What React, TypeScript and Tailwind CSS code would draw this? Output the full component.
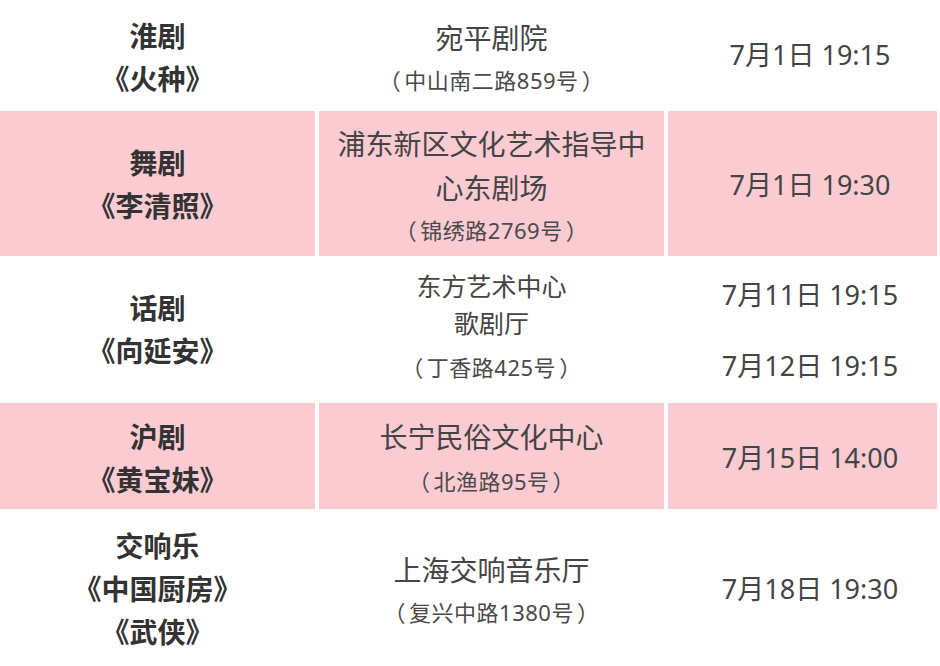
import React from "react";

const font = { fontFamily: '"Noto Sans", "Noto Sans CJK SC", sans-serif' };

function Row({
  pink,
  h,
  c1,
  c2,
  c3,
}: {
  pink?: boolean;
  h: string;
  c1: React.ReactNode;
  c2: React.ReactNode;
  c3: React.ReactNode;
}) {
  const bg = pink ? "bg-[#fbcbd2]" : "bg-white";
  return (
    <>
      <div className={`${bg} ${h} flex flex-col items-center justify-center text-center text-[28px] font-bold text-[#333] leading-[43px]`}>
        {c1}
      </div>
      <div className={`${bg} ${h} flex flex-col items-center justify-center text-center text-[#444]`}>{c2}</div>
      <div className={`${bg} ${h} flex flex-col items-center justify-center text-[27px] text-[#444] pl-[15px]`}>{c3}</div>
    </>
  );
}

const Main = ({ children, cls = "" }: { children: React.ReactNode; cls?: string }) => (
  <div className={`text-[28px] leading-[44px] ${cls}`}>{children}</div>
);
const Sub = ({ children, cls = "" }: { children: React.ReactNode; cls?: string }) => (
  <div className={`text-[22px] leading-[40px] tracking-[0.5px] text-[#4a4a4a] ${cls}`}>
    （<span className="px-[3px]">{children}</span>）
  </div>
);

export default function App() {
  return (
    <div className="w-[940px] h-[666px] bg-white overflow-hidden" style={font}>
      <div className="grid grid-cols-[315px_345px_269px] gap-x-[4px] gap-y-[2px]">
        <Row
          h="h-[109px]"
          c1={
            <div className="pt-[6px]">
              <div>淮剧</div>
              <div>《火种》</div>
            </div>
          }
          c2={
            <div className="pt-[7px] flex flex-col items-center">
              <Main cls="leading-[40px]">宛平剧院</Main>
              <Sub>中山南二路859号</Sub>
            </div>
          }
          c3={<div className="pt-[1px]">7月1日 19:15</div>}
        />
        <Row
          pink
          h="h-[145px]"
          c1={
            <div className="pt-[3px]">
              <div>舞剧</div>
              <div>《李清照》</div>
            </div>
          }
          c2={
            <div className="pt-[4px] flex flex-col items-center">
              <Main>浦东新区文化艺术指导中</Main>
              <Main>心东剧场</Main>
              <Sub>锦绣路2769号</Sub>
            </div>
          }
          c3={<div className="pt-[4px]">7月1日 19:30</div>}
        />
        <Row
          h="h-[143px]"
          c1={
            <div>
              <div>话剧</div>
              <div>《向延安》</div>
            </div>
          }
          c2={
            <div className="flex flex-col items-center">
              <div className="text-[25px] leading-[37px]">东方艺术中心</div>
              <div className="text-[25px] leading-[37px]">歌剧厅</div>
              <Sub cls="leading-[50px]">丁香路425号</Sub>
            </div>
          }
          c3={
            <div className="flex flex-col items-center gap-[40px]">
              <div className="leading-[31px]">7月11日 19:15</div>
              <div className="leading-[31px]">7月12日 19:15</div>
            </div>
          }
        />
        <Row
          pink
          h="h-[106px]"
          c1={
            <div className="pt-[5px]">
              <div>沪剧</div>
              <div>《黄宝妹》</div>
            </div>
          }
          c2={
            <div className="pt-[5px] flex flex-col items-center">
              <Main>长宁民俗文化中心</Main>
              <Sub cls="leading-[44px]">北渔路95号</Sub>
            </div>
          }
          c3={<div className="pt-[5px]">7月15日 14:00</div>}
        />
        <Row
          h="h-[155px]"
          c1={
            <div className="pt-[2px]">
              <div>交响乐</div>
              <div>《中国厨房》</div>
              <div>《武侠》</div>
            </div>
          }
          c2={
            <div className="pt-[3px] flex flex-col items-center">
              <Main cls="leading-[40px]">上海交响音乐厅</Main>
              <Sub>复兴中路1380号</Sub>
            </div>
          }
          c3={<div className="pt-[1px]">7月18日 19:30</div>}
        />
      </div>
    </div>
  );
}
